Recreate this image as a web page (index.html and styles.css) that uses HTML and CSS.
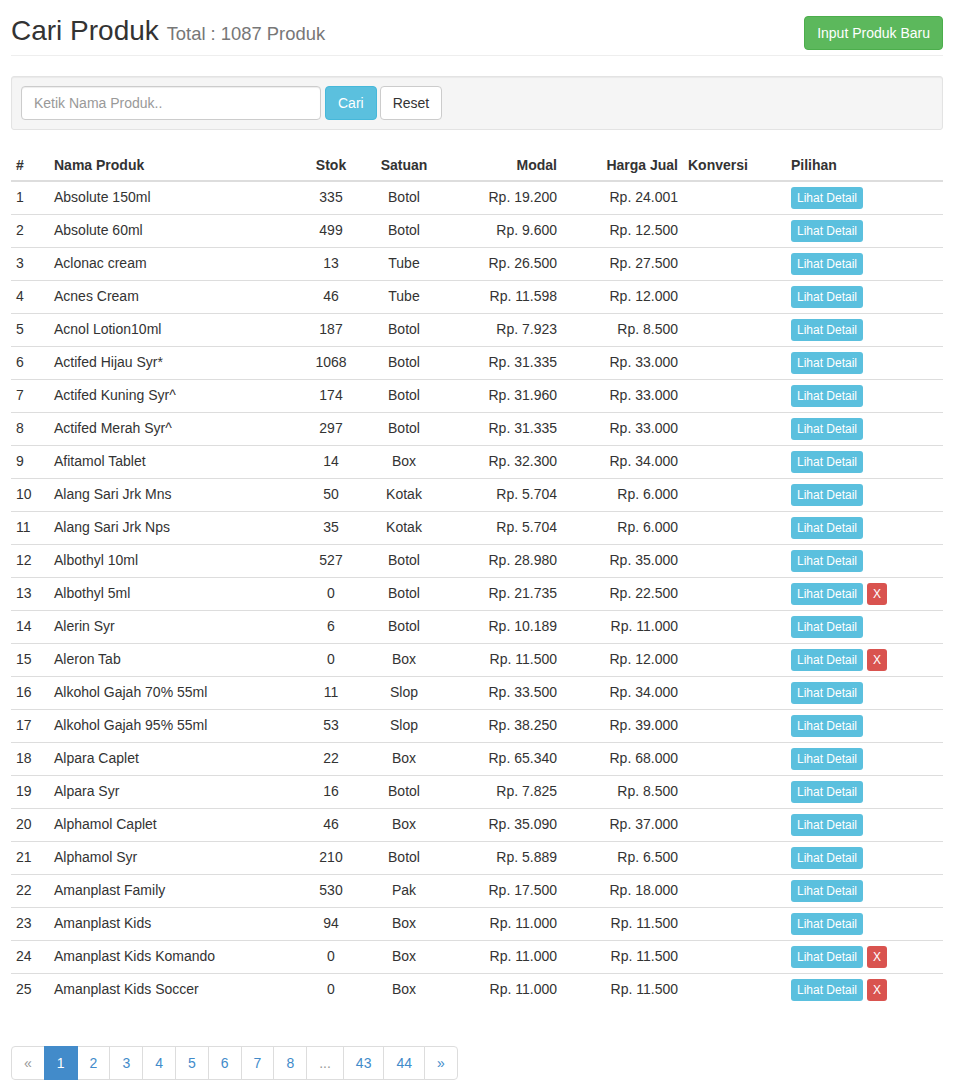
FILE: index.html
```html
<!DOCTYPE html>
<html lang="id">
<head>
<meta charset="utf-8">
<title>Cari Produk</title>
<link rel="stylesheet" href="styles.css">
</head>
<body>
<div class="container">
  <div class="page-header">
    <h2 class="title">Cari Produk <small>Total : 1087 Produk</small></h2>
    <a class="btn btn-success" href="#">Input Produk Baru</a>
  </div>

  <div class="well">
    <form class="search-form">
      <input class="form-control" type="text" placeholder="Ketik Nama Produk..">
      <button class="btn btn-info" type="button">Cari</button>
      <button class="btn btn-default" type="button">Reset</button>
    </form>
  </div>

  <table class="table">
    <colgroup>
      <col class="c-no"><col class="c-nama"><col class="c-stok"><col class="c-satuan">
      <col class="c-modal"><col class="c-harga"><col class="c-konv"><col class="c-pil">
    </colgroup>
    <thead>
      <tr>
        <th>#</th><th>Nama Produk</th><th class="center">Stok</th><th class="center">Satuan</th>
        <th class="right">Modal</th><th class="right">Harga Jual</th><th>Konversi</th><th>Pilihan</th>
      </tr>
    </thead>
    <tbody>
      <tr><td>1</td><td>Absolute 150ml</td><td class="center">335</td><td class="center">Botol</td><td class="right">Rp. 19.200</td><td class="right">Rp. 24.001</td><td></td><td><div class="acts"><a class="btn-xs btn-info" href="#">Lihat Detail</a></div></td></tr>
      <tr><td>2</td><td>Absolute 60ml</td><td class="center">499</td><td class="center">Botol</td><td class="right">Rp. 9.600</td><td class="right">Rp. 12.500</td><td></td><td><div class="acts"><a class="btn-xs btn-info" href="#">Lihat Detail</a></div></td></tr>
      <tr><td>3</td><td>Aclonac cream</td><td class="center">13</td><td class="center">Tube</td><td class="right">Rp. 26.500</td><td class="right">Rp. 27.500</td><td></td><td><div class="acts"><a class="btn-xs btn-info" href="#">Lihat Detail</a></div></td></tr>
      <tr><td>4</td><td>Acnes Cream</td><td class="center">46</td><td class="center">Tube</td><td class="right">Rp. 11.598</td><td class="right">Rp. 12.000</td><td></td><td><div class="acts"><a class="btn-xs btn-info" href="#">Lihat Detail</a></div></td></tr>
      <tr><td>5</td><td>Acnol Lotion10ml</td><td class="center">187</td><td class="center">Botol</td><td class="right">Rp. 7.923</td><td class="right">Rp. 8.500</td><td></td><td><div class="acts"><a class="btn-xs btn-info" href="#">Lihat Detail</a></div></td></tr>
      <tr><td>6</td><td>Actifed Hijau Syr*</td><td class="center">1068</td><td class="center">Botol</td><td class="right">Rp. 31.335</td><td class="right">Rp. 33.000</td><td></td><td><div class="acts"><a class="btn-xs btn-info" href="#">Lihat Detail</a></div></td></tr>
      <tr><td>7</td><td>Actifed Kuning Syr^</td><td class="center">174</td><td class="center">Botol</td><td class="right">Rp. 31.960</td><td class="right">Rp. 33.000</td><td></td><td><div class="acts"><a class="btn-xs btn-info" href="#">Lihat Detail</a></div></td></tr>
      <tr><td>8</td><td>Actifed Merah Syr^</td><td class="center">297</td><td class="center">Botol</td><td class="right">Rp. 31.335</td><td class="right">Rp. 33.000</td><td></td><td><div class="acts"><a class="btn-xs btn-info" href="#">Lihat Detail</a></div></td></tr>
      <tr><td>9</td><td>Afitamol Tablet</td><td class="center">14</td><td class="center">Box</td><td class="right">Rp. 32.300</td><td class="right">Rp. 34.000</td><td></td><td><div class="acts"><a class="btn-xs btn-info" href="#">Lihat Detail</a></div></td></tr>
      <tr><td>10</td><td>Alang Sari Jrk Mns</td><td class="center">50</td><td class="center">Kotak</td><td class="right">Rp. 5.704</td><td class="right">Rp. 6.000</td><td></td><td><div class="acts"><a class="btn-xs btn-info" href="#">Lihat Detail</a></div></td></tr>
      <tr><td>11</td><td>Alang Sari Jrk Nps</td><td class="center">35</td><td class="center">Kotak</td><td class="right">Rp. 5.704</td><td class="right">Rp. 6.000</td><td></td><td><div class="acts"><a class="btn-xs btn-info" href="#">Lihat Detail</a></div></td></tr>
      <tr><td>12</td><td>Albothyl 10ml</td><td class="center">527</td><td class="center">Botol</td><td class="right">Rp. 28.980</td><td class="right">Rp. 35.000</td><td></td><td><div class="acts"><a class="btn-xs btn-info" href="#">Lihat Detail</a></div></td></tr>
      <tr><td>13</td><td>Albothyl 5ml</td><td class="center">0</td><td class="center">Botol</td><td class="right">Rp. 21.735</td><td class="right">Rp. 22.500</td><td></td><td><div class="acts"><a class="btn-xs btn-info" href="#">Lihat Detail</a><a class="btn-xs btn-danger" href="#">X</a></div></td></tr>
      <tr><td>14</td><td>Alerin Syr</td><td class="center">6</td><td class="center">Botol</td><td class="right">Rp. 10.189</td><td class="right">Rp. 11.000</td><td></td><td><div class="acts"><a class="btn-xs btn-info" href="#">Lihat Detail</a></div></td></tr>
      <tr><td>15</td><td>Aleron Tab</td><td class="center">0</td><td class="center">Box</td><td class="right">Rp. 11.500</td><td class="right">Rp. 12.000</td><td></td><td><div class="acts"><a class="btn-xs btn-info" href="#">Lihat Detail</a><a class="btn-xs btn-danger" href="#">X</a></div></td></tr>
      <tr><td>16</td><td>Alkohol Gajah 70% 55ml</td><td class="center">11</td><td class="center">Slop</td><td class="right">Rp. 33.500</td><td class="right">Rp. 34.000</td><td></td><td><div class="acts"><a class="btn-xs btn-info" href="#">Lihat Detail</a></div></td></tr>
      <tr><td>17</td><td>Alkohol Gajah 95% 55ml</td><td class="center">53</td><td class="center">Slop</td><td class="right">Rp. 38.250</td><td class="right">Rp. 39.000</td><td></td><td><div class="acts"><a class="btn-xs btn-info" href="#">Lihat Detail</a></div></td></tr>
      <tr><td>18</td><td>Alpara Caplet</td><td class="center">22</td><td class="center">Box</td><td class="right">Rp. 65.340</td><td class="right">Rp. 68.000</td><td></td><td><div class="acts"><a class="btn-xs btn-info" href="#">Lihat Detail</a></div></td></tr>
      <tr><td>19</td><td>Alpara Syr</td><td class="center">16</td><td class="center">Botol</td><td class="right">Rp. 7.825</td><td class="right">Rp. 8.500</td><td></td><td><div class="acts"><a class="btn-xs btn-info" href="#">Lihat Detail</a></div></td></tr>
      <tr><td>20</td><td>Alphamol Caplet</td><td class="center">46</td><td class="center">Box</td><td class="right">Rp. 35.090</td><td class="right">Rp. 37.000</td><td></td><td><div class="acts"><a class="btn-xs btn-info" href="#">Lihat Detail</a></div></td></tr>
      <tr><td>21</td><td>Alphamol Syr</td><td class="center">210</td><td class="center">Botol</td><td class="right">Rp. 5.889</td><td class="right">Rp. 6.500</td><td></td><td><div class="acts"><a class="btn-xs btn-info" href="#">Lihat Detail</a></div></td></tr>
      <tr><td>22</td><td>Amanplast Family</td><td class="center">530</td><td class="center">Pak</td><td class="right">Rp. 17.500</td><td class="right">Rp. 18.000</td><td></td><td><div class="acts"><a class="btn-xs btn-info" href="#">Lihat Detail</a></div></td></tr>
      <tr><td>23</td><td>Amanplast Kids</td><td class="center">94</td><td class="center">Box</td><td class="right">Rp. 11.000</td><td class="right">Rp. 11.500</td><td></td><td><div class="acts"><a class="btn-xs btn-info" href="#">Lihat Detail</a></div></td></tr>
      <tr><td>24</td><td>Amanplast Kids Komando</td><td class="center">0</td><td class="center">Box</td><td class="right">Rp. 11.000</td><td class="right">Rp. 11.500</td><td></td><td><div class="acts"><a class="btn-xs btn-info" href="#">Lihat Detail</a><a class="btn-xs btn-danger" href="#">X</a></div></td></tr>
      <tr><td>25</td><td>Amanplast Kids Soccer</td><td class="center">0</td><td class="center">Box</td><td class="right">Rp. 11.000</td><td class="right">Rp. 11.500</td><td></td><td><div class="acts"><a class="btn-xs btn-info" href="#">Lihat Detail</a><a class="btn-xs btn-danger" href="#">X</a></div></td></tr>
    </tbody>
  </table>

  <ul class="pagination">
    <li class="disabled"><span>&laquo;</span></li>
    <li class="active"><span>1</span></li>
    <li><a href="#">2</a></li>
    <li><a href="#">3</a></li>
    <li><a href="#">4</a></li>
    <li><a href="#">5</a></li>
    <li><a href="#">6</a></li>
    <li><a href="#">7</a></li>
    <li><a href="#">8</a></li>
    <li class="disabled"><span>...</span></li>
    <li><a href="#">43</a></li>
    <li><a href="#">44</a></li>
    <li><a href="#">&raquo;</a></li>
  </ul>
</div>
</body>
</html>
```

FILE: styles.css
```css
* { box-sizing: border-box; }

html, body {
  margin: 0;
  padding: 0;
  background: #fff;
}

body {
  font-family: "Liberation Sans", Arial, Helvetica, sans-serif;
  font-size: 14px;
  line-height: 20px;
  color: #333;
}

.container {
  padding: 0 10px 0 11px;
}

/* Header */
.page-header {
  display: flex;
  justify-content: space-between;
  align-items: flex-start;
  height: 56px;
  padding-top: 15px;
  border-bottom: 1px solid #eee;
}

.title {
  margin: 0;
  font-size: 28px;
  line-height: 31px;
  font-weight: normal;
  color: #333;
}

.title small {
  font-size: 18.4px;
  line-height: 20px;
  color: #777;
  font-weight: normal;
}

.page-header .btn {
  margin-top: 1px;
}

/* Buttons */
.btn {
  display: inline-block;
  padding: 6px 12px;
  font-family: inherit;
  font-size: 14px;
  line-height: 20px;
  border: 1px solid transparent;
  border-radius: 4px;
  text-decoration: none;
  white-space: nowrap;
  cursor: pointer;
}

.btn-success {
  background: #5cb85c;
  border-color: #4cae4c;
  color: #fff;
}

.btn-info {
  background: #5bc0de;
  border-color: #46b8da;
  color: #fff;
}

.btn-default {
  background: #fff;
  border-color: #ccc;
  color: #333;
}

.btn-danger {
  background: #d9534f;
  border-color: #d43f3a;
  color: #fff;
}

/* Search well */
.well {
  margin-top: 20px;
  margin-bottom: 20px;
  height: 54px;
  padding: 9px;
  background: #f5f5f5;
  border: 1px solid #e3e3e3;
  border-radius: 3px;
  box-shadow: inset 0 1px 1px rgba(0, 0, 0, 0.05);
}

.search-form {
  display: flex;
  align-items: center;
  margin: 0;
}

.form-control {
  width: 300px;
  height: 34px;
  padding: 6px 12px;
  font-family: inherit;
  font-size: 14px;
  line-height: 20px;
  color: #555;
  background: #fff;
  border: 1px solid #ccc;
  border-radius: 4px;
  box-shadow: inset 0 1px 1px rgba(0, 0, 0, 0.075);
  margin-right: 4px;
}

.form-control::placeholder {
  color: #999;
}

.search-form .btn {
  height: 34px;
}

.search-form .btn-info {
  margin-right: 3px;
}

/* Table */
.table {
  width: 100%;
  border-collapse: collapse;
  border-spacing: 0;
  table-layout: fixed;
  margin-bottom: 40px;
}

.c-no { width: 38px; }
.c-nama { width: 247px; }
.c-stok { width: 70px; }
.c-satuan { width: 76px; }
.c-modal { width: 120px; }
.c-harga { width: 121px; }
.c-konv { width: 103px; }
.c-pil { width: 157px; }

.table th,
.table td {
  padding: 5px;
  text-align: left;
  line-height: 20px;
  white-space: nowrap;
}

.table th {
  font-weight: bold;
  vertical-align: bottom;
  border-bottom: 2px solid #ddd;
}

.table td {
  vertical-align: top;
  border-top: 1px solid #ddd;
}

.table tbody tr:first-child td {
  border-top: 0;
}

.table .center { text-align: center; }
.table .right { text-align: right; }

.acts {
  display: flex;
  align-items: center;
  gap: 4px;
  height: 22px;
}

.btn-xs {
  display: inline-block;
  padding: 1px 5px;
  font-size: 12px;
  line-height: 18px;
  border: 1px solid transparent;
  border-radius: 3px;
  text-decoration: none;
  white-space: nowrap;
}

/* Pagination */
.pagination {
  display: flex;
  margin: 0;
  padding: 0;
  list-style: none;
}

.pagination li > a,
.pagination li > span {
  display: block;
  padding: 6px 12px;
  margin-left: -1px;
  line-height: 20px;
  color: #428bca;
  background: #fff;
  border: 1px solid #ddd;
  text-decoration: none;
}

.pagination li:first-child > span {
  margin-left: 0;
  border-radius: 4px 0 0 4px;
}

.pagination li:last-child > a {
  border-radius: 0 4px 4px 0;
}

.pagination li.disabled > span {
  color: #999;
}

.pagination li.active > span {
  position: relative;
  z-index: 2;
  background: #428bca;
  border-color: #428bca;
  color: #fff;
}
```
